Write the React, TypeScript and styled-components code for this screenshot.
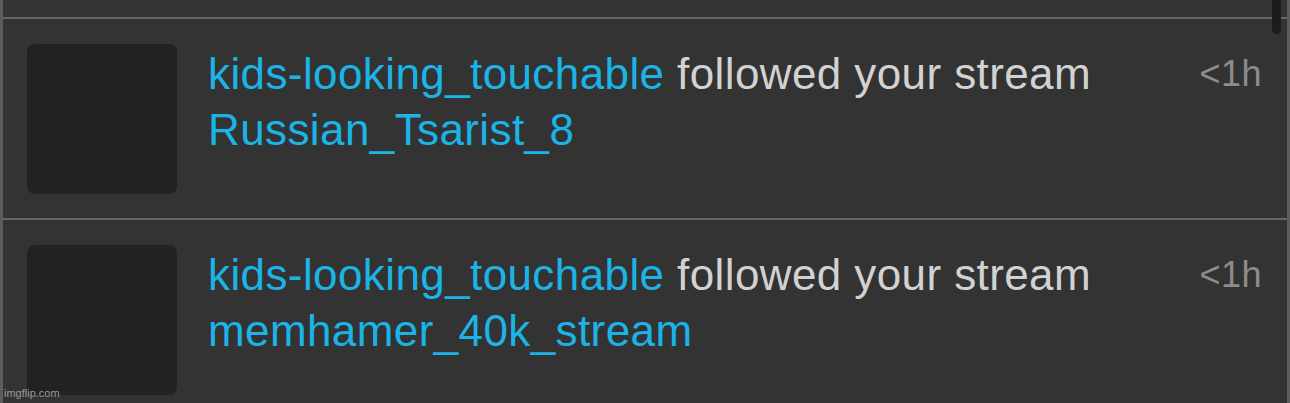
import React from 'react'
import styled, { createGlobalStyle } from 'styled-components'

const GlobalStyle = createGlobalStyle`
  html, body {
    margin: 0;
    padding: 0;
    background: #333333;
    font-family: "Liberation Sans", Arial, Helvetica, sans-serif;
  }
`

const Screen = styled.div`
  position: relative;
  width: 1290px;
  height: 403px;
  overflow: hidden;
  box-sizing: border-box;
  background: #333333;
  border-left: 3px solid #5c5c5c;
  border-right: 3px solid #5c5c5c;
`

const TopStrip = styled.div`
  height: 17px;
`

const Row = styled.div`
  display: flex;
  align-items: flex-start;
  border-top: 2px solid #656565;
  padding: 25px 25px 24px 24px;
  height: 150px;
`

const Avatar = styled.div`
  flex: 0 0 150px;
  width: 150px;
  height: 150px;
  border-radius: 8px;
  background: #222222;
`

const Body = styled.div`
  flex: 1;
  margin-left: 31px;
  padding-top: 2px;
  font-size: 44px;
  line-height: 56px;
  letter-spacing: 0.4px;
`

const Line = styled.div`
  white-space: nowrap;
`

const Link = styled.span`
  color: #1bb4e6;
`

const Muted = styled.span`
  color: #d2d2d2;
`

const Time = styled.div`
  padding-top: 8px;
  font-size: 36px;
  line-height: 44px;
  letter-spacing: 0.5px;
  color: #8c8c8c;
`

const ScrollThumb = styled.div`
  position: absolute;
  top: -12px;
  left: 1269px;
  width: 9px;
  height: 46px;
  border-radius: 5px;
  background: #1c1c1c;
`

const Watermark = styled.div`
  position: absolute;
  left: 1px;
  bottom: 4px;
  font-size: 11px;
  line-height: 12px;
  color: #9a9a9a;
`

type Notice = {
  user: string
  stream: string
  time: string
}

const notices: Notice[] = [
  { user: 'kids-looking_touchable', stream: 'Russian_Tsarist_8', time: '<1h' },
  { user: 'kids-looking_touchable', stream: 'memhamer_40k_stream', time: '<1h' },
]

export default function App() {
  return (
    <>
      <GlobalStyle />
      <Screen>
        <TopStrip />
        {notices.map((n, i) => (
          <Row key={i}>
            <Avatar />
            <Body>
              <Line>
                <Link>{n.user}</Link> <Muted>followed your stream</Muted>
              </Line>
              <Line>
                <Link>{n.stream}</Link>
              </Line>
            </Body>
            <Time>{n.time}</Time>
          </Row>
        ))}
        <ScrollThumb />
        <Watermark>imgflip.com</Watermark>
      </Screen>
    </>
  )
}
